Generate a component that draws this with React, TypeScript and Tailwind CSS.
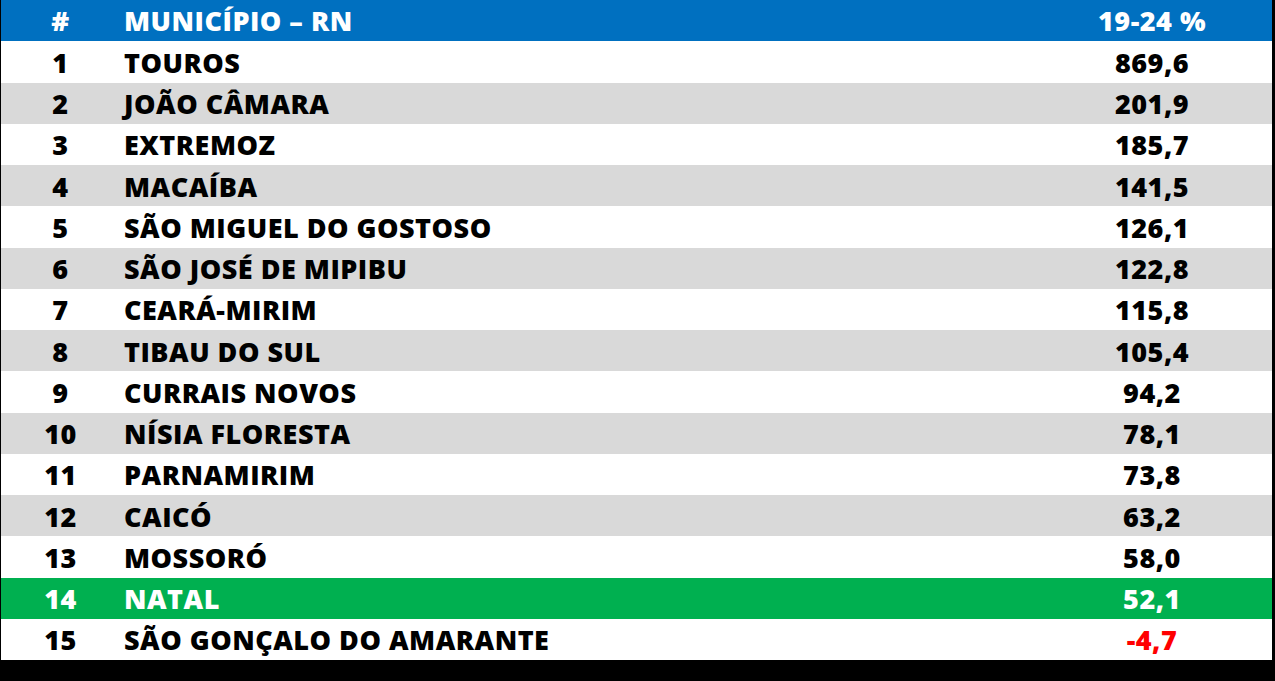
import React from "react";

const rows: [string, string, string][] = [
  ["1", "TOUROS", "869,6"],
  ["2", "JOÃO CÂMARA", "201,9"],
  ["3", "EXTREMOZ", "185,7"],
  ["4", "MACAÍBA", "141,5"],
  ["5", "SÃO MIGUEL DO GOSTOSO", "126,1"],
  ["6", "SÃO JOSÉ DE MIPIBU", "122,8"],
  ["7", "CEARÁ-MIRIM", "115,8"],
  ["8", "TIBAU DO SUL", "105,4"],
  ["9", "CURRAIS NOVOS", "94,2"],
  ["10", "NÍSIA FLORESTA", "78,1"],
  ["11", "PARNAMIRIM", "73,8"],
  ["12", "CAICÓ", "63,2"],
  ["13", "MOSSORÓ", "58,0"],
  ["14", "NATAL", "52,1"],
  ["15", "SÃO GONÇALO DO AMARANTE", "-4,7"],
];

export default function App() {
  return (
    <div className="w-[1275px] h-[681px] bg-black overflow-hidden">
      <div
        className="ml-[1px] w-[1271px] h-[660px] grid grid-rows-[repeat(16,1fr)] font-extrabold text-[27px] leading-none tracking-[0.5px]"
        style={{ fontFamily: "'Open Sans', sans-serif" }}
      >
        <div className="grid grid-cols-[119px_1fr_240px] items-center bg-[#0070C0] text-white">
          <div className="text-center">#</div>
          <div className="pl-[4px]">MUNICÍPIO – RN</div>
          <div className="text-center">19-24 %</div>
        </div>
        {rows.map(([n, name, v], i) => {
          const natal = n === "14";
          const bg = natal ? "bg-[#00B050] text-white" : i % 2 === 1 ? "bg-[#D9D9D9] text-black" : "bg-white text-black";
          return (
            <div key={n} className={`grid grid-cols-[119px_1fr_240px] items-center pt-[1px] ${bg}`}>
              <div className="text-center">{n}</div>
              <div className="pl-[4px]">{name}</div>
              <div className={`text-center ${v.startsWith("-") ? "text-[#FF0000]" : ""}`}>{v}</div>
            </div>
          );
        })}
      </div>
    </div>
  );
}
